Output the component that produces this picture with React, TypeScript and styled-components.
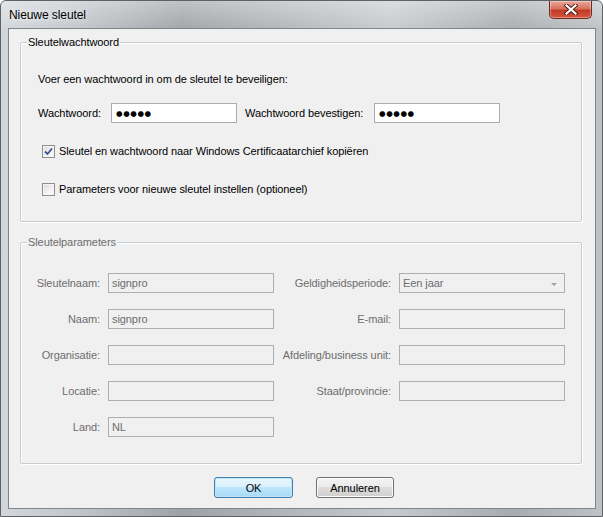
import React from "react";
import styled, { createGlobalStyle } from "styled-components";

const Global = createGlobalStyle`
  html, body { margin: 0; padding: 0; }
  body { font-family: "Liberation Sans", Arial, sans-serif; font-size: 11px; letter-spacing: -0.08px; color: #000; }
`;

const Window = styled.div`
  width: 603px;
  height: 517px;
  box-sizing: border-box;
  display: flex;
  flex-direction: column;
  border: 1px solid #5e6266;
  border-radius: 6px 6px 0 0;
  background: linear-gradient(90deg, #d3d7db 0%, #c3c7cb 12%, #9fa3a6 30%, #b4b7ba 48%, #c7cacd 65%, #a9acaf 85%, #bfc2c5 100%);
  overflow: hidden;
`;

const TitleBar = styled.div`
  height: 27px;
  display: flex;
  justify-content: space-between;
  align-items: flex-start;
  background: linear-gradient(180deg, rgba(255,255,255,0.35), rgba(255,255,255,0.05));
`;

const Title = styled.div`
  padding: 7px 0 0 8px;
  font-size: 12px;
  color: #000;
  text-shadow: 0 0 6px rgba(255,255,255,0.9);
`;

const CloseButton = styled.div`
  width: 43px;
  height: 18px;
  margin: 0 10px 0 0;
  box-sizing: border-box;
  border: 1px solid #6b2a22;
  border-top: none;
  border-radius: 0 0 5px 5px;
  background: linear-gradient(180deg, #e9a99b 0%, #d8705f 45%, #c13b26 55%, #d8553f 100%);
  box-shadow: inset 0 0 0 1px rgba(255,255,255,0.35);
  display: flex;
  align-items: center;
  justify-content: center;
`;

const FrameBody = styled.div`
  flex: 1;
  display: flex;
  padding: 0 6px 7px 7px;
  min-height: 0;
`;

const Client = styled.div`
  flex: 1;
  box-sizing: border-box;
  background: #f0f0f0;
  border: 1px solid #7f858b;
  padding: 13px 13px 0 11px;
  display: flex;
  flex-direction: column;
`;

const Group = styled.div<{ $h: number; $mt?: number }>`
  position: relative;
  box-sizing: border-box;
  height: ${(p) => p.$h}px;
  margin-top: ${(p) => p.$mt ?? 0}px;
  border: 1px solid #c8ccd0;
  box-shadow: inset 1px 1px 0 #fff, 1px 1px 0 #fff;
  border-radius: 2px;
`;

const Legend = styled.span<{ $disabled?: boolean }>`
  position: absolute;
  top: -7px;
  left: 6px;
  padding: 0 1px;
  background: #f0f0f0;
  line-height: 13px;
  color: ${(p) => (p.$disabled ? "#6d6d6d" : "#000")};
`;

const GroupInner = styled.div`
  display: flex;
  flex-direction: column;
  padding: 29px 0 0 17px;
`;

const Intro = styled.div`
  line-height: 14px;
`;

const PasswordRow = styled.div`
  margin-top: 17px;
  display: grid;
  grid-template-columns: 73px 126px 137px 126px;
  height: 20px;
  align-items: center;
`;

const RowLabel = styled.span<{ $pad?: number }>`
  padding-left: ${(p) => p.$pad ?? 0}px;
  white-space: nowrap;
`;

const Input = styled.div<{ $disabled?: boolean }>`
  box-sizing: border-box;
  height: 20px;
  border: 1px solid ${(p) => (p.$disabled ? "#adb0b3" : "#abadb3")};
  background: ${(p) => (p.$disabled ? "#f0f0f0" : "#fff")};
  color: ${(p) => (p.$disabled ? "#6d6d6d" : "#000")};
  display: flex;
  align-items: center;
  padding: 0 3px;
  position: relative;
  white-space: nowrap;
`;

const Dots = styled.span`
  font-family: "DejaVu Sans", sans-serif;
  font-size: 7.5px;
  letter-spacing: 0.6px;
  padding-left: 1px;
`;

const CheckRow = styled.label<{ $mt: number }>`
  margin: ${(p) => p.$mt}px 0 0 4px;
  display: flex;
  align-items: center;
  gap: 4px;
  height: 14px;
  line-height: 14px;
`;

const Box = styled.span`
  width: 13px;
  height: 13px;
  box-sizing: border-box;
  border: 1px solid #8e8f8f;
  background: linear-gradient(135deg, #d8d8d8 0%, #f4f4f4 60%, #fdfdfd 100%);
  box-shadow: inset 0 0 0 1px #f4f4f4;
  display: flex;
  align-items: center;
  justify-content: center;
`;

const ParamGrid = styled.div`
  display: grid;
  grid-template-columns: 79px 166px 109px 166px;
  grid-auto-rows: 20px;
  column-gap: 8px;
  row-gap: 16px;
  padding-top: 30px;
`;

const ParamLabel = styled.span`
  justify-self: end;
  align-self: center;
  color: #6d6d6d;
  white-space: nowrap;
`;

const ComboArrow = styled.span`
  position: absolute;
  right: 7px;
  top: 9px;
  width: 0;
  height: 0;
  border-left: 3px solid transparent;
  border-right: 3px solid transparent;
  border-top: 3px solid #a0a0a0;
`;

const ButtonRow = styled.div`
  margin-top: 13px;
  display: flex;
  justify-content: center;
  gap: 23px;
  padding-left: 6px;
`;

const Button = styled.div<{ $primary?: boolean; $w: number }>`
  width: ${(p) => p.$w}px;
  height: 21px;
  box-sizing: border-box;
  border-radius: 3px;
  border: 1px solid ${(p) => (p.$primary ? "#3c7fb1" : "#707070")};
  background: ${(p) =>
    p.$primary
      ? "linear-gradient(180deg, #eaf6fd 0%, #d9f0fc 50%, #bee6fd 50%, #a7d9f5 100%)"
      : "linear-gradient(180deg, #f2f2f2 0%, #ebebeb 50%, #dddddd 50%, #cfcfcf 100%)"};
  box-shadow: inset 0 0 0 1px ${(p) => (p.$primary ? "#c4e5f6" : "#fcfcfc")};
  display: flex;
  align-items: center;
  justify-content: center;
  color: #000;
`;

const params: [string, string, string, string | null][] = [
  ["Sleutelnaam:", "signpro", "Geldigheidsperiode:", "combo"],
  ["Naam:", "signpro", "E-mail:", ""],
  ["Organisatie:", "", "Afdeling/business unit:", ""],
  ["Locatie:", "", "Staat/provincie:", ""],
  ["Land:", "NL", "", null],
];

export default function App() {
  return (
    <>
      <Global />
      <Window>
        <TitleBar>
          <Title>Nieuwe sleutel</Title>
          <CloseButton>
            <svg width="14" height="11" viewBox="0 0 14 11">
              <path d="M2.5 1.5 L11.5 9.5 M11.5 1.5 L2.5 9.5" stroke="#4a1a14" strokeWidth="4" strokeLinecap="square" />
              <path d="M2.5 1.5 L11.5 9.5 M11.5 1.5 L2.5 9.5" stroke="#fff" strokeWidth="2.2" strokeLinecap="square" />
            </svg>
          </CloseButton>
        </TitleBar>
        <FrameBody>
          <Client>
            <Group $h={180}>
              <Legend>Sleutelwachtwoord</Legend>
              <GroupInner>
                <Intro>Voer een wachtwoord in om de sleutel te beveiligen:</Intro>
                <PasswordRow>
                  <RowLabel>Wachtwoord:</RowLabel>
                  <Input><Dots>●●●●●</Dots></Input>
                  <RowLabel $pad={8}>Wachtwoord bevestigen:</RowLabel>
                  <Input><Dots>●●●●●</Dots></Input>
                </PasswordRow>
                <CheckRow $mt={21}>
                  <Box>
                    <svg width="9" height="9" viewBox="0 0 9 9">
                      <path d="M1 4.5 L3.5 7 L8 1.5" fill="none" stroke="#3a5193" strokeWidth="1.8" />
                    </svg>
                  </Box>
                  Sleutel en wachtwoord naar Windows Certificaatarchief kopiëren
                </CheckRow>
                <CheckRow $mt={24}>
                  <Box />
                  Parameters voor nieuwe sleutel instellen (optioneel)
                </CheckRow>
              </GroupInner>
            </Group>
            <Group $h={222} $mt={20}>
              <Legend $disabled>Sleutelparameters</Legend>
              <ParamGrid>
                {params.map(([l1, v1, l2, v2]) => (
                  <React.Fragment key={l1}>
                    <ParamLabel>{l1}</ParamLabel>
                    <Input $disabled>{v1}</Input>
                    {v2 !== null ? (
                      <>
                        <ParamLabel>{l2}</ParamLabel>
                        <Input $disabled>
                          {v2 === "combo" ? (
                            <>
                              Een jaar
                              <ComboArrow />
                            </>
                          ) : (
                            v2
                          )}
                        </Input>
                      </>
                    ) : null}
                  </React.Fragment>
                ))}
              </ParamGrid>
            </Group>
            <ButtonRow>
              <Button $primary $w={79}>OK</Button>
              <Button $w={78}>Annuleren</Button>
            </ButtonRow>
          </Client>
        </FrameBody>
      </Window>
    </>
  );
}
